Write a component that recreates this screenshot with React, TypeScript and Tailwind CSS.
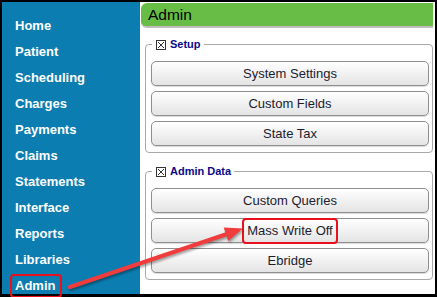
const navItems = [
  'Home',
  'Patient',
  'Scheduling',
  'Charges',
  'Payments',
  'Claims',
  'Statements',
  'Interface',
  'Reports',
  'Libraries',
];

const sections = [
  { title: 'Setup', buttons: ['System Settings', 'Custom Fields', 'State Tax'] },
  { title: 'Admin Data', buttons: ['Custom Queries', 'Mass Write Off', 'Ebridge'] },
  { title: 'Admin Reports', buttons: [] as string[] },
];

function CheckBox() {
  return (
    <svg width="10" height="10" viewBox="0 0 10 10" className="shrink-0">
      <rect x="0.5" y="0.5" width="9" height="9" fill="#fff" stroke="#333" />
      <path d="M2 2 L8 8 M8 2 L2 8" stroke="#333" strokeWidth="1" />
    </svg>
  );
}

function AdminButton({ label }: { label: string }) {
  const highlighted = label === 'Mass Write Off';
  return (
    <button className="flex h-[25px] w-full items-center justify-center rounded-[5px] border border-[#8f8f8f] bg-gradient-to-b from-[#ffffff] to-[#e4e4e4] text-[13px] text-[#1c1c30] shadow-[0_1px_1px_rgba(0,0,0,0.15)]">
      {highlighted ? (
        <span className="flex h-[26px] items-center rounded-[4px] border-[2.5px] border-[#e8101c] px-[3px]">
          {label}
        </span>
      ) : (
        label
      )}
    </button>
  );
}

export default function App() {
  return (
    <div
      className="relative h-[297px] w-[437px] overflow-hidden bg-black pb-[3px] pl-[2px] pr-[2px] pt-[2px]"
      style={{ fontFamily: '"Liberation Sans", Arial, sans-serif' }}
    >
      <div className="flex h-full">
        <nav className="w-[138px] shrink-0 bg-[#0b7db0] pt-[11px]">
          {navItems.map((item) => (
            <div key={item} className="h-[26px] pl-[13px] text-[13px] font-bold leading-[26px] text-white">
              {item}
            </div>
          ))}
          <div className="pl-[8px]">
            <span className="inline-block h-[24px] rounded-[4px] border-2 border-[#e8101c] pl-[3px] pr-[5px] text-[13px] font-bold leading-[20px] text-white">
              Admin
            </span>
          </div>
        </nav>

        <main className="flex-1 overflow-hidden bg-white pr-[2px] pt-[1px]">
          <div className="ml-[1px] h-[25px] rounded-l-[6px] border-b-2 border-[#bdbdbd] bg-[#67bd45] pl-[7px] text-[15.5px] leading-[23px] text-black">
            Admin
          </div>

          <div className="pl-[5px]">
            {sections.map((section, i) => (
              <fieldset
                key={section.title}
                className={`rounded-[4px] border border-[#a9a9a9] pb-[6px] pl-[5px] pr-[3px] pt-[10px] ${i === 0 ? 'mt-[10px]' : 'mt-[12px]'}`}
              >
                <legend className="ml-[1px] flex items-center gap-[4px] px-[4px] pr-[3px] text-[11px] font-bold leading-[13px] text-[#0a0a8a]">
                  <CheckBox />
                  {section.title}
                </legend>
                <div className="flex flex-col gap-[5px]">
                  {section.buttons.map((b) => (
                    <AdminButton key={b} label={b} />
                  ))}
                </div>
              </fieldset>
            ))}
          </div>
        </main>
      </div>

      <svg
        className="pointer-events-none absolute left-0 top-0"
        width="437"
        height="297"
        viewBox="0 0 437 297"
        style={{ filter: 'drop-shadow(1px 2px 1px rgba(0,0,0,0.35))' }}
      >
        <line x1="70" y1="287" x2="227" y2="234" stroke="#f03c3c" strokeWidth="4" strokeLinecap="round" />
        <polygon points="243,228.5 228.2,240.9 223.7,227.6" fill="#f03c3c" />
      </svg>
    </div>
  );
}
